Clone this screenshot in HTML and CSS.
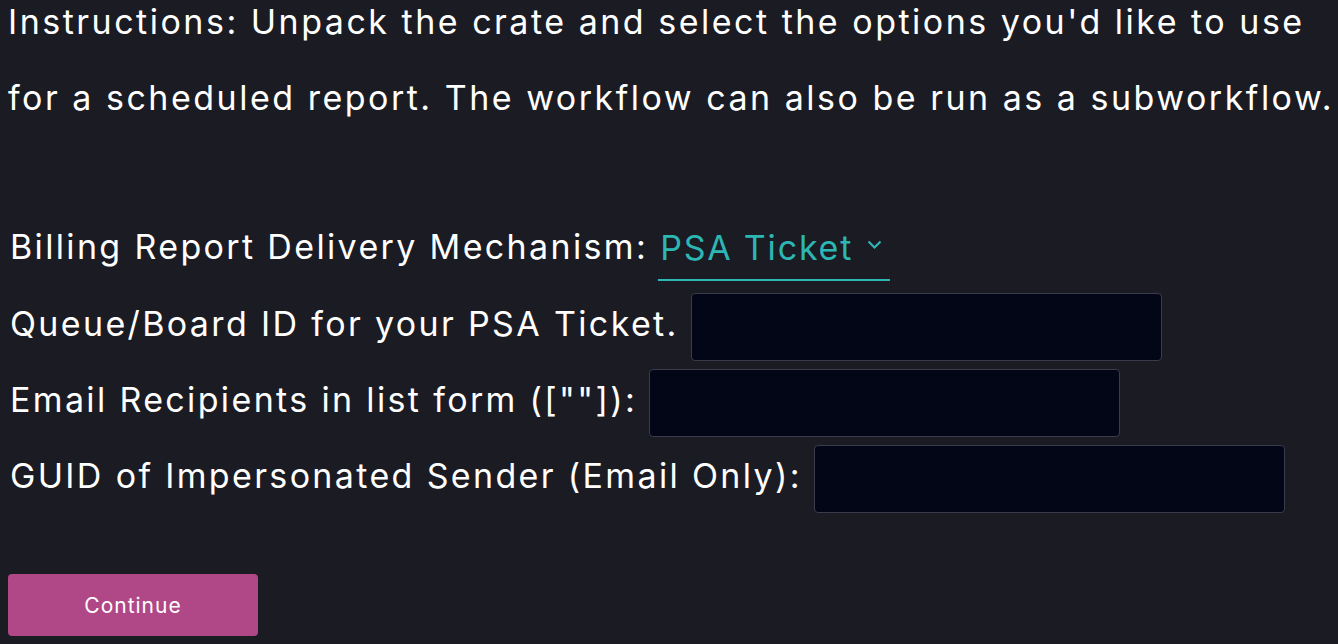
FILE: index.html
```html
<!DOCTYPE html>
<html lang="en">
<head>
<meta charset="utf-8">
<title>Crate options</title>
<link rel="stylesheet" href="styles.css">
</head>
<body>
<main class="page">
  <p class="instructions">Instructions: Unpack the crate and select the options you'd like to use for a scheduled report. The workflow can also be run as a subworkflow.</p>
  <form class="form">
    <div class="row row-select">
      <span class="label">Billing Report Delivery Mechanism:</span>
      <span class="select">PSA Ticket
        <svg class="chev" width="15" height="10" viewBox="0 0 15 10"><path d="M1.5 1.5 L7.5 7.5 L13.5 1.5" fill="none" stroke="currentColor" stroke-width="2.2"/></svg>
      </span>
    </div>
    <div class="row">
      <label class="label" for="q">Queue/Board ID for your PSA Ticket.</label>
      <input class="input" id="q" type="text">
    </div>
    <div class="row">
      <label class="label" for="e">Email Recipients in list form ([""]):</label>
      <input class="input" id="e" type="text">
    </div>
    <div class="row">
      <label class="label" for="g">GUID of Impersonated Sender (Email Only):</label>
      <input class="input" id="g" type="text">
    </div>
    <button class="btn" type="button">Continue</button>
  </form>
</main>
</body>
</html>
```

FILE: styles.css
```css
html, body {
  margin: 0;
  padding: 0;
  background: #1b1b23;
  color: #ffffff;
  font-family: "Inter", "Open Sans", sans-serif;
}
.page {
  padding: 0 0 0 8px;
  margin-top: -16px;
}
.instructions {
  margin: 0;
  font-size: 34px;
  letter-spacing: 2.5px;
  line-height: 76px;
  padding-bottom: 76px;
}
.form {
  display: flex;
  flex-direction: column;
  align-items: flex-start;
}
.row {
  display: flex;
  align-items: center;
  gap: 12px;
  height: 76px;
  font-size: 34px;
  letter-spacing: 2.35px;
}
.row-select {
  height: 77px;
  gap: 10px;
}
.label {
  white-space: nowrap;
  padding-left: 2px;
  padding-bottom: 8px;
}
.select {
  align-self: flex-start;
  display: flex;
  align-items: center;
  gap: 14px;
  color: #2cb7b5;
  letter-spacing: 1.8px;
  height: 66px;
  margin-top: 3px;
  padding: 0 8px 0 2px;
  border-bottom: 2px solid #2cb7b5;
  box-sizing: border-box;
}
.chev {
  margin-top: -5px;
}
.input {
  width: 471px;
  height: 68px;
  box-sizing: border-box;
  background: #020617;
  border: 1px solid #3b3b4b;
  border-radius: 4px;
  margin: 0;
  color: #fff;
  font: inherit;
}
.btn {
  margin-top: 57px;
  width: 250px;
  height: 62px;
  background: #b04887;
  color: #fff;
  border: none;
  border-radius: 4px;
  font-family: "Inter", sans-serif;
  font-size: 21px;
  letter-spacing: 1px;
  padding-top: 2px;
}
```
